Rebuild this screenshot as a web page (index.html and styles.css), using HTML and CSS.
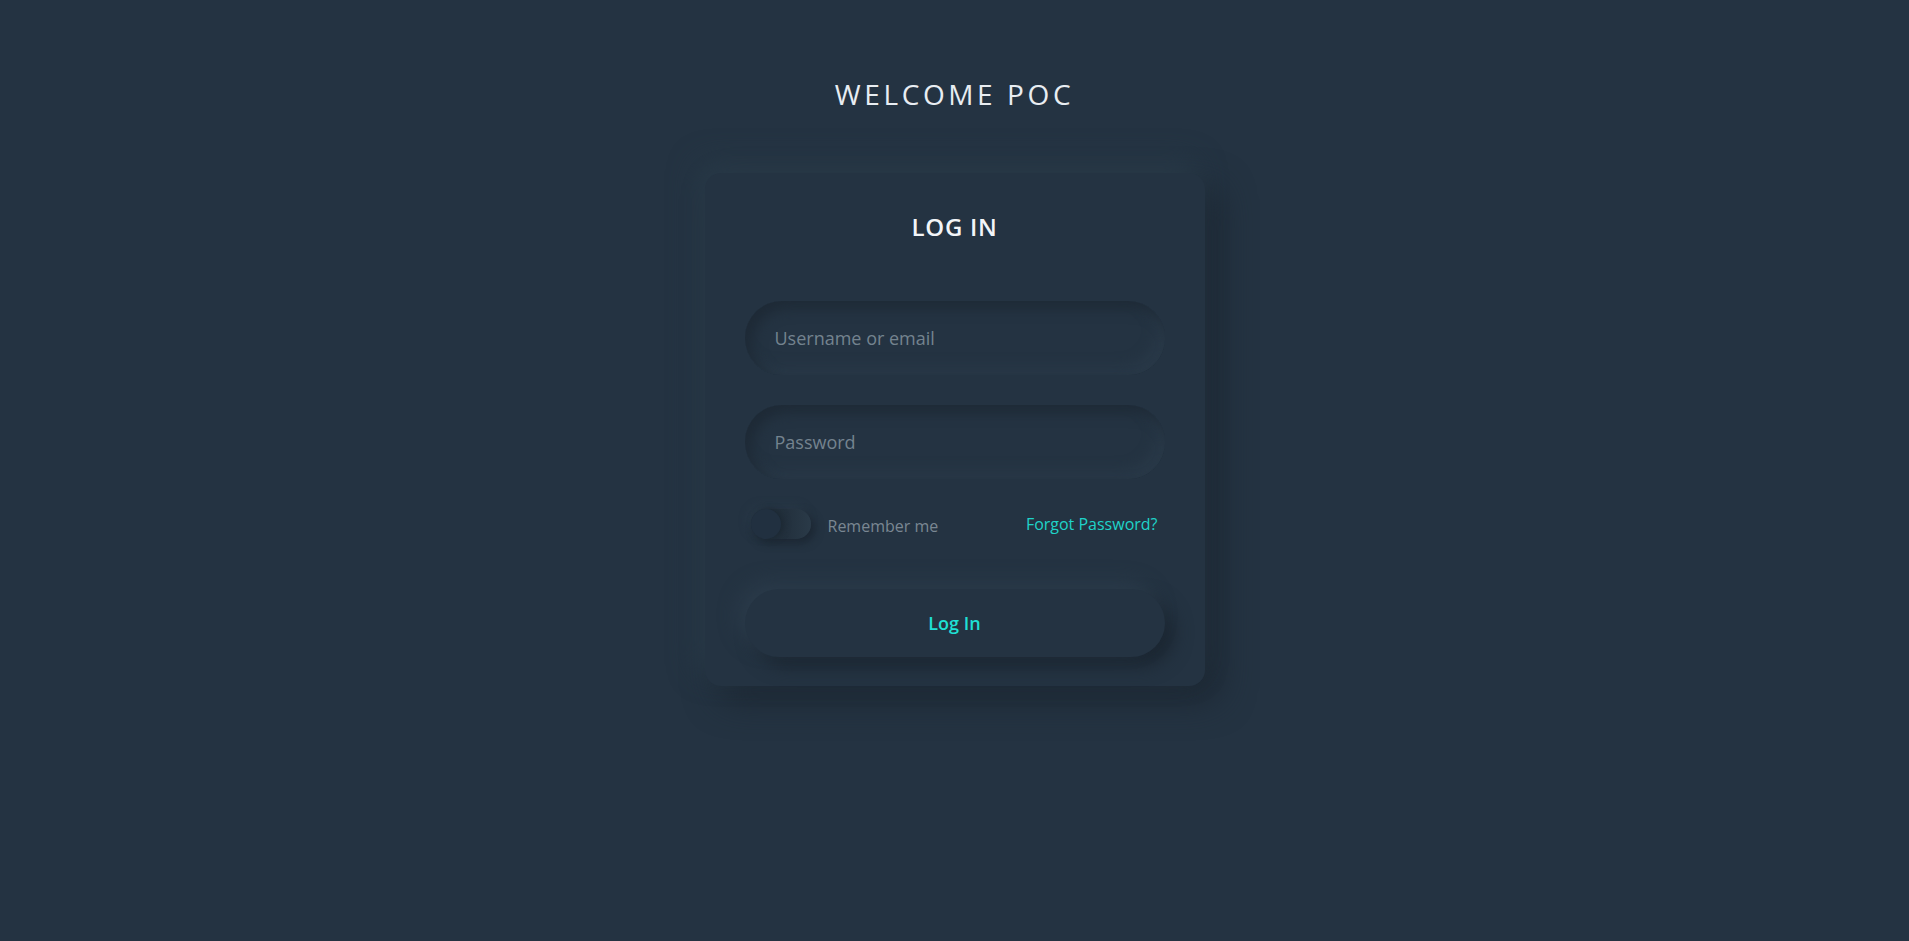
FILE: index.html
```html
<!DOCTYPE html>
<html lang="en">
<head>
<meta charset="utf-8">
<title>Welcome POC</title>
<link rel="stylesheet" href="styles.css">
</head>
<body>
<main class="page">
  <h1 class="welcome">WELCOME POC</h1>
  <form class="card">
    <h2 class="card-title">LOG IN</h2>
    <input class="field" type="text" placeholder="Username or email">
    <input class="field field-pass" type="password" placeholder="Password">
    <div class="options">
      <label class="remember">
        <span class="toggle"><span class="knob"></span></span>
        <span class="remember-text">Remember me</span>
      </label>
      <a class="forgot" href="#">Forgot Password?</a>
    </div>
    <button class="btn" type="button">Log In</button>
  </form>
</main>
</body>
</html>
```

FILE: styles.css
```css
* { box-sizing: border-box; }
html, body { margin: 0; padding: 0; }
body {
  background: #243342;
  font-family: "Open Sans", "Liberation Sans", sans-serif;
  min-height: 941px;
}
.page {
  display: flex;
  flex-direction: column;
  align-items: center;
  padding-top: 75px;
}
.welcome {
  margin: 0 0 60px 0;
  font-size: 28px;
  font-weight: 400;
  line-height: 38px;
  letter-spacing: 3.6px;
  color: #e8edf2;
}
.card {
  width: 500px;
  background: #243342;
  border-radius: 16px;
  padding: 37px 40px 29px 40px;
  display: flex;
  flex-direction: column;
  box-shadow: -8px -12px 28px #283947, 14px 14px 34px #1c2732;
}
.card-title {
  margin: 0 0 58px 0;
  text-align: center;
  font-size: 24px;
  font-weight: 600;
  line-height: 33px;
  color: #f2f5f8;
  letter-spacing: 0.7px;
}
.field {
  height: 74px;
  width: 100%;
  border: none;
  outline: none;
  border-radius: 37px;
  background: #243342;
  padding: 0 30px;
  font-family: "Open Sans", "Liberation Sans", sans-serif;
  font-size: 18px;
  color: #c8d2da;
  box-shadow: inset 7px 7px 14px #1e2a36, inset -7px -7px 14px #2a3a49;
}
.field::placeholder { color: #74838f; }
.field-pass { margin-top: 30px; }
.options {
  margin-top: 30px;
  height: 30px;
  display: flex;
  align-items: center;
  justify-content: space-between;
  padding: 0 7px 0 6px;
}
.remember {
  display: flex;
  align-items: center;
  gap: 17px;
}
.toggle {
  position: relative;
  width: 60px;
  height: 30px;
  border-radius: 15px;
  background: linear-gradient(90deg, #1f2c38 0%, #23313e 60%, #2a3a48 100%);
  box-shadow: 4px 4px 8px #1c2733, -3px -3px 8px #2a3a49;
}
.knob {
  position: absolute;
  left: 0;
  top: 0;
  width: 30px;
  height: 30px;
  border-radius: 50%;
  background: #213040;
  box-shadow: 3px 0 6px #1c2833;
}
.remember-text {
  font-size: 16px;
  color: #7a8792;
  padding-top: 3px;
}
.forgot {
  font-size: 16px;
  color: #1fd3c9;
  text-decoration: none;
  padding-bottom: 1px;
}
.btn {
  margin-top: 50px;
  height: 68px;
  width: 100%;
  border: none;
  border-radius: 34px;
  background: #243342;
  color: #1fe0d5;
  font-family: "Open Sans", "Liberation Sans", sans-serif;
  font-size: 18px;
  font-weight: 600;
  box-shadow: -8px -8px 18px #2a3a49, 9px 9px 18px #1b2631;
}
```
